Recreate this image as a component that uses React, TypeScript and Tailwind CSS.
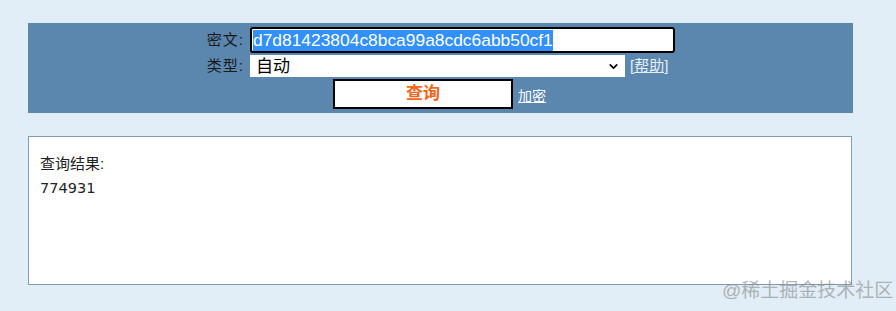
import { ChevronDown } from "lucide-react";

const CJK = "font-['Liberation_Sans','Noto_Sans_CJK_SC',sans-serif]";

export default function App() {
  return (
    <div className={`relative h-[311px] w-[896px] overflow-hidden bg-[#e1eef7] pt-[23px] ${CJK}`}>
      <div className="mx-[28px] flex h-[90px] w-[825px] flex-col bg-[#5b87ae] pt-[4px]">
        <div className="flex items-center pl-[172px]">
          <span className="mr-[6px] w-[44px] text-right text-[15px] tracking-[1px] text-[#1a1a1a]">密文:</span>
          <div className="flex h-[26px] w-[425px] items-center rounded-[3px] border-2 border-black bg-white pl-[1px]">
            <span className="bg-[#3390ff] text-[17.4px] leading-[21px] text-white">
              d7d81423804c8bca99a8cdc6abb50cf1
            </span>
          </div>
        </div>
        <div className="mt-[2px] flex items-center pl-[172px]">
          <span className="mr-[6px] w-[44px] text-right text-[15px] tracking-[1px] text-[#1a1a1a]">类型:</span>
          <div className="flex h-[22px] w-[375px] items-center justify-between bg-white pl-[6px] pr-[5px]">
            <span className="text-[17px] leading-none text-black">自动</span>
            <ChevronDown className="h-[13px] w-[13px] text-black" strokeWidth={3} />
          </div>
          <a className="ml-[5px] text-[15px] text-[#e6eef6] underline">[帮助]</a>
        </div>
        <div className="mt-[1px] flex items-center pl-[305px]">
          <div className="flex h-[30px] w-[180px] items-center justify-center border-2 border-black bg-white">
            <span className="text-[17px] font-bold text-[#f2661b]">查询</span>
          </div>
          <a className="ml-[5px] mt-[6px] text-[14px] text-white underline">加密</a>
        </div>
      </div>

      <div className="mx-[28px] mt-[23px] h-[149px] w-[824px] border border-[#7f9cb8] bg-white px-[11px] pt-[15px] text-[15px] leading-[24px] text-[#222]">
        <div>查询结果:</div>
        <div className="font-['DejaVu_Sans',sans-serif] text-[14.5px]">774931</div>
      </div>

      <div className="pointer-events-none absolute left-[722px] top-[277px] text-[19px] text-[#8a8a8a] opacity-60">
        @稀土掘金技术社区
      </div>
    </div>
  );
}
